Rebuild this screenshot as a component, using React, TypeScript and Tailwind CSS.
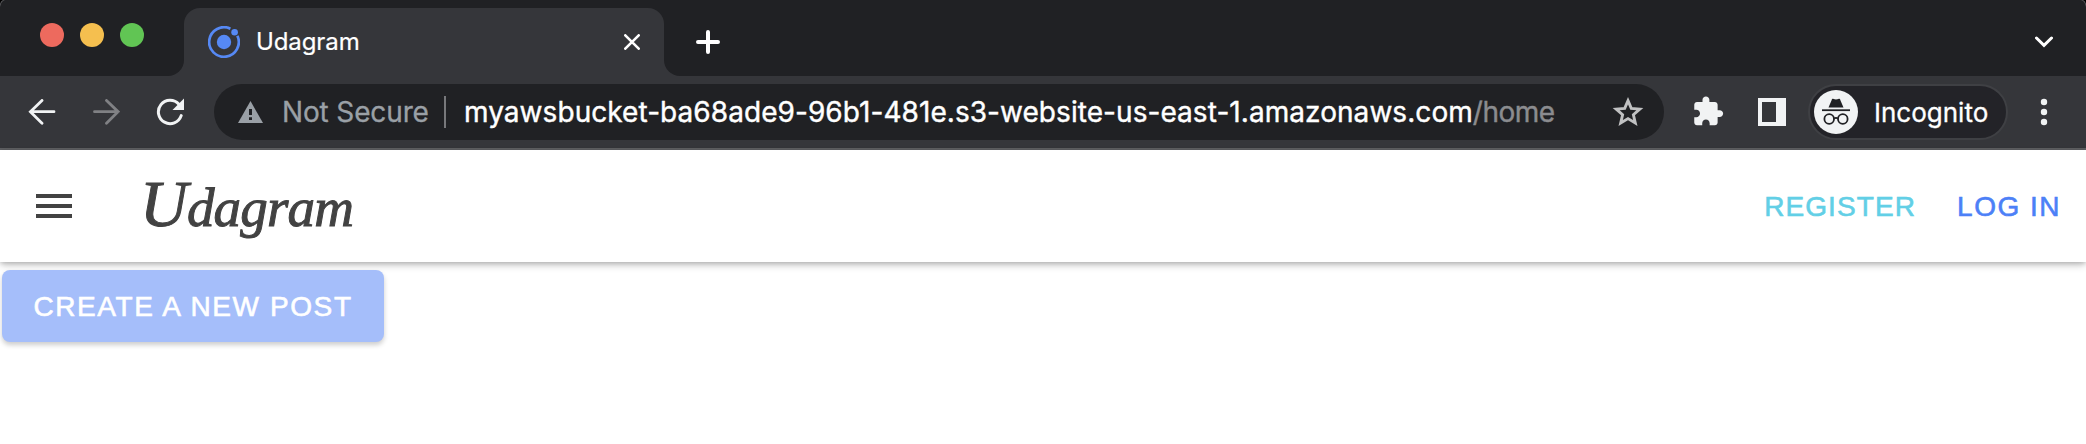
function IonicMark() {
  return (
    <svg className="size-8 shrink-0" viewBox="0 0 32 32" fill="none">
      <circle cx="16" cy="16" r="7.2" fill="#5689f4" />
      <circle cx="26.6" cy="6.2" r="3.3" fill="#5689f4" />
      <path d="M22.4 2.7A14.8 14.8 0 1 0 29.4 9.8" stroke="#5689f4" strokeWidth="2.7" />
    </svg>
  );
}

function IncognitoMark() {
  return (
    <svg className="size-11 shrink-0" viewBox="0 0 44 44" fill="none">
      <circle cx="22" cy="22" r="22" fill="#f1f3f4" />
      <path
        d="M14.5 17.6 17.6 10.2C17.9 9.1 18.7 8.6 19.6 9L22 9.6 24.4 9C25.3 8.6 26.1 9.1 26.4 10.2L29.5 17.6Z"
        fill="#202124"
      />
      <path d="M8 20.2H36" stroke="#202124" strokeWidth="1.8" />
      <circle cx="15.2" cy="29" r="4.8" stroke="#202124" strokeWidth="1.8" />
      <circle cx="28.8" cy="29" r="4.8" stroke="#202124" strokeWidth="1.8" />
      <path d="M20 28.6Q22 27.2 24 28.6" stroke="#202124" strokeWidth="1.8" />
    </svg>
  );
}

function Corner({ className }: { className: string }) {
  return (
    <svg className={className} viewBox="0 0 8 8">
      <path d="M0 0H5Q1 1 0 7Z" fill="#5c5d60" />
      <path d="M0 0H3Q.8.8 0 4Z" fill="#000" />
    </svg>
  );
}

function TabStrip() {
  return (
    <div className="relative flex h-[76px] bg-[#35363a]">
      <div className="flex w-[184px] items-start gap-4 rounded-br-2xl bg-[#202124] pt-[23px] pl-10">
        <span className="size-6 rounded-full bg-[#ed6a5e]" />
        <span className="size-6 rounded-full bg-[#f5bf4f]" />
        <span className="size-6 rounded-full bg-[#61c554]" />
      </div>
      <div className="w-[480px] bg-[#202124] pt-2">
        <div className="flex h-[68px] items-center rounded-t-2xl bg-[#35363a] px-6">
          <IonicMark />
          <span className="ml-4 flex-1 text-[24px] leading-8 tracking-[-0.1px] text-white [-webkit-text-stroke:0.2px_#fff]">Udagram</span>
          <svg className="size-4" viewBox="0 0 16 16" fill="none" stroke="#fff" strokeWidth="2.6" strokeLinecap="round">
            <path d="M1.3 1.3 14.7 14.7M14.7 1.3 1.3 14.7" />
          </svg>
        </div>
      </div>
      <div className="flex flex-1 items-center justify-between rounded-bl-2xl bg-[#202124] pt-2 pr-[33px] pl-8">
        <svg className="size-6" viewBox="0 0 24 24" fill="none" stroke="#fff" strokeWidth="4" strokeLinecap="round">
          <path d="M12 2V22M2 12H22" />
        </svg>
        <svg className="h-3 w-[18px]" viewBox="0 0 18 12" fill="none" stroke="#fff" strokeWidth="3" strokeLinecap="round">
          <path d="M1.5 2 9 9.3 16.5 2" />
        </svg>
      </div>
      <Corner className="absolute top-0 left-0 size-2" />
      <Corner className="absolute top-0 right-0 size-2 -scale-x-100" />
    </div>
  );
}

function Toolbar() {
  return (
    <div className="flex h-[74px] items-center border-b-2 border-[#5f6063] bg-[#35363a] pl-7">
      <svg className="h-[26px] w-7 shrink-0" viewBox="0 0 28 26" fill="none" stroke="#f1f3f4" strokeWidth="2.8" strokeLinecap="round">
        <path d="M26 12.7H2.5M14 1.4 2.4 12.7 14 24.2" />
      </svg>
      <svg className="ml-[36px] h-[26px] w-7 shrink-0" viewBox="0 0 28 26" fill="none" stroke="#808184" strokeWidth="2.8" strokeLinecap="round">
        <path d="M2.500 12.700H26M14.500 1.400 26.100 12.700 14.500 24.200" />
      </svg>
      <svg className="ml-[36px] h-7 w-7 shrink-0" viewBox="0 0 28 28" fill="none">
        <path d="M22.900 6.200A11.700 11.700 0 1 0 25.200 17.600" stroke="#f1f3f4" strokeWidth="3" strokeLinecap="round" />
        <path d="M28 0.500V12H16.500Z" fill="#f1f3f4" />
      </svg>
      <div className="ml-[30px] flex h-14 w-[1450px] shrink-0 items-center rounded-full bg-[#202124] pl-6 text-[28px] leading-8">
        <svg className="h-[22px] w-[25px] shrink-0" viewBox="0 0 25 22">
          <path d="M12.500 0 25 22H0Z" fill="#9aa0a6" />
          <path d="M11 8h3v6h-3zM11 16.300h3v2.800h-3z" fill="#202124" />
        </svg>
        <span className="ml-[19px] w-[162px] tracking-[-0.14px] whitespace-nowrap text-[#9aa0a6] [-webkit-text-stroke:0.3px_#9aa0a6]">Not Secure</span>
        <span className="h-8 w-0.5 bg-[#77787b]" />
        <span className="ml-[18px] tracking-[0.06px] whitespace-nowrap text-white [-webkit-text-stroke:0.4px_currentColor]">
          myawsbucket-ba68ade9-96b1-481e.s3-website-us-east-1.amazonaws.com
          <span className="tracking-[-0.5px] text-[#8b8c8f]">/home</span>
        </span>
        <svg className="mr-[20px] ml-auto h-8 w-8 shrink-0" viewBox="0 0 32 32" fill="none" stroke="#c0c1c2" strokeWidth="2.9">
          <path d="M16 4.600 19.300 12.400 27.800 13.100 21.400 18.700 23.300 27 16 22.600 8.700 27 10.600 18.700 4.200 13.100 12.700 12.400Z" />
        </svg>
      </div>
      <svg className="mr-px ml-[27px] size-[34px] shrink-0 pb-px" viewBox="0 0 24 24" fill="#f1f3f4">
        <path d="M20.500 11H19V7c0-1.100-.9-2-2-2h-4V3.500C13 2.120 11.880 1 10.500 1S8 2.120 8 3.500V5H4c-1.100 0-1.990.9-1.990 2v3.800H3.500c1.490 0 2.700 1.210 2.700 2.700s-1.210 2.700-2.700 2.700H2V20c0 1.100.9 2 2 2h3.800v-1.500c0-1.490 1.210-2.700 2.700-2.700s2.700 1.210 2.700 2.700V22H17c1.100 0 2-.9 2-2v-4h1.500c1.380 0 2.500-1.120 2.500-2.500S21.880 11 20.500 11z" />
      </svg>
      <svg className="ml-8 size-7 shrink-0" viewBox="0 0 28 28">
        <path fillRule="evenodd" d="M0 0H28V28H0ZM4 4V24H18V4Z" fill="#f1f3f4" />
      </svg>
      <div className="ml-[22px] flex h-14 w-[200px] shrink-0 items-center rounded-full border-2 border-[#3f4044] bg-[#232328] pl-1">
        <IncognitoMark />
        <span className="ml-4 pt-0.5 text-[26px] leading-8 text-white [-webkit-text-stroke:0.3px_#fff]">Incognito</span>
      </div>
      <svg className="ml-8 h-7 w-2 shrink-0" viewBox="0 0 8 28" fill="#f1f3f4">
        <circle cx="4" cy="4" r="3.2" />
        <circle cx="4" cy="14" r="3.2" />
        <circle cx="4" cy="24" r="3.2" />
      </svg>
    </div>
  );
}

function AppHeader() {
  return (
    <header className="relative flex h-28 items-center bg-white pr-[25px] shadow-[0_4px_8px_-1px_rgba(0,0,0,0.2),0_1px_5px_rgba(0,0,0,0.2)]">
      <div className="ml-9 grid h-6 w-9 shrink-0 content-between">
        <span className="h-1 bg-[#424242]" />
        <span className="h-1 bg-[#424242]" />
        <span className="h-1 bg-[#424242]" />
      </div>
      <span className="ml-[68px] inline-block font-['Liberation_Serif',serif] text-[55px] leading-[72px] tracking-[-0.8px] text-[#424242] italic [-webkit-text-stroke:1px_#424242] first-letter:text-[66px]">
        Udagram
      </span>
      <nav className="ml-auto flex gap-[41px] pt-0.5 text-[28px] leading-8 whitespace-nowrap">
        <a className="tracking-[1.1px] text-[#62cfe6] [-webkit-text-stroke:0.6px_#62cfe6]">REGISTER</a>
        <a className="tracking-[1.5px] text-[#4c80f7] [-webkit-text-stroke:0.6px_#4c80f7]">LOG IN</a>
      </nav>
    </header>
  );
}

export default function App() {
  return (
    <div className="h-[444px] w-[2086px] overflow-hidden bg-white">
      <div className="font-['Inter','Liberation_Sans',sans-serif]">
        <TabStrip />
        <Toolbar />
      </div>
      <div className="font-['Liberation_Sans',sans-serif]">
        <AppHeader />
        <main className="pt-2 pl-0.5">
          <button className="relative h-[72px] w-[382px] rounded-lg bg-[#a5befa] pt-0.5 text-[28px] leading-8 tracking-[1.6px] whitespace-nowrap text-white shadow-[0_3px_5px_rgba(0,0,0,0.2)] [-webkit-text-stroke:0.6px_#fff]">
            CREATE A NEW POST
          </button>
        </main>
      </div>
    </div>
  );
}
